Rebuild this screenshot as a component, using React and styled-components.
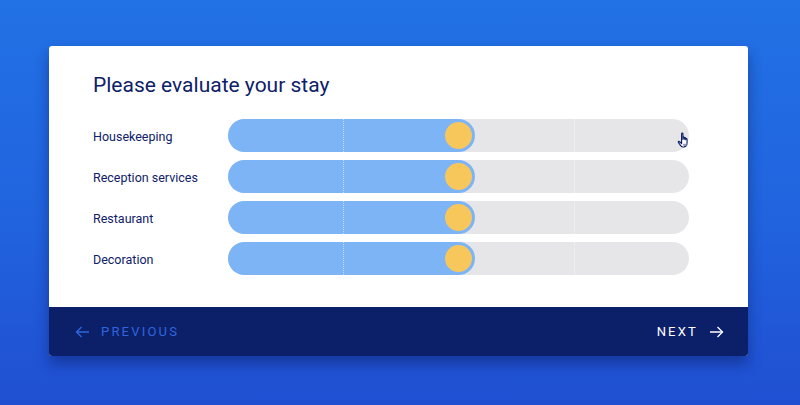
import React from 'react';
import styled, { createGlobalStyle } from 'styled-components';

const GlobalStyle = createGlobalStyle`
  html, body {
    margin: 0;
    padding: 0;
    height: 100%;
  }
  body {
    font-family: Roboto, 'Liberation Sans', sans-serif;
    background: linear-gradient(180deg, #2271e5 0%, #2163de 55%, #204fd2 100%);
  }
`;

const Page = styled.div`
  width: 800px;
  height: 405px;
  padding-top: 46px;
  box-sizing: border-box;
  display: flex;
  justify-content: center;
`;

const Card = styled.div`
  width: 699px;
  margin-left: -3px;
  height: 310px;
  border-radius: 3px;
  overflow: hidden;
  background: #fff;
  box-shadow: 0 8px 14px rgba(8, 22, 90, 0.45);
  display: flex;
  flex-direction: column;
`;

const Body = styled.div`
  flex: 1;
  padding: 27px 59px 0 44px;
`;

const Title = styled.h1`
  margin: 0 0 22px;
  font-size: 21px;
  line-height: 24px;
  font-weight: 400;
  color: #0e2168;
`;

const Rows = styled.div`
  display: flex;
  flex-direction: column;
  gap: 8px;
`;

const Row = styled.div`
  display: grid;
  grid-template-columns: 135px 1fr;
  align-items: center;
`;

const Label = styled.span`
  padding-top: 2px;
  font-size: 12.5px;
  color: #0e2168;
`;

const Track = styled.div`
  position: relative;
  height: 33px;
  border-radius: 17px;
  background: #e6e6e9;
`;

const Fill = styled.div`
  position: absolute;
  left: 0;
  top: 0;
  bottom: 0;
  border-radius: 17px 0 0 17px;
  background: #7db4f6;
`;

const Tick = styled.div`
  position: absolute;
  top: 0;
  bottom: 0;
  width: 0;
  border-left: 1px dotted rgba(255, 255, 255, 0.55);
`;

const Knob = styled.div`
  position: absolute;
  top: 0;
  width: 33px;
  height: 33px;
  margin-left: -17px;
  box-sizing: border-box;
  border-radius: 50%;
  border: 3px solid #7db4f6;
  background: #f8c75b;
`;

const Cursor = styled.svg`
  position: absolute;
  right: -4px;
  top: 13px;
  display: block;
`;

const Footer = styled.div`
  height: 49px;
  background: #0c206a;
  display: flex;
  align-items: center;
  justify-content: space-between;
  padding: 0 24px 0 26px;
`;

const NavButton = styled.button`
  display: flex;
  align-items: center;
  gap: 11px;
  border: 0;
  background: none;
  padding: 0;
  font-family: Roboto, 'Liberation Sans', sans-serif;
  font-size: 13px;
  letter-spacing: 2.2px;
  color: ${(props) => (props.active ? '#ffffff' : '#2f66dd')};
  cursor: pointer;
`;

const items = ['Housekeeping', 'Reception services', 'Restaurant', 'Decoration'];

const Arrow = ({ dir }) => (
  <svg width="15" height="12" viewBox="0 0 15 12" fill="none" stroke="currentColor" strokeWidth="1.3">
    {dir === 'left' ? (
      <>
        <path d="M14 6H1.5" />
        <path d="M6.5 1L1.5 6l5 5" />
      </>
    ) : (
      <>
        <path d="M1 6h12.5" />
        <path d="M8.5 1l5 5-5 5" />
      </>
    )}
  </svg>
);

const HandCursor = () => (
  <Cursor width="16" height="17" viewBox="0 0 14 15">
    <path
      d="M4 1.5c0-.8 1.2-.8 1.2 0V6.5V5c0-.8 1.2-.8 1.2 0v1.5V5.6c0-.8 1.2-.8 1.2 0v1.2-.4c0-.8 1.2-.8 1.2 0v3.4c0 2-1.2 3.4-3 3.4H5.2c-1.1 0-1.8-.7-2.4-1.6L1.2 9.2c-.5-.7.3-1.4.9-.8L4 10.2Z"
      fill="#fff"
      stroke="#0e2168"
      strokeWidth="1"
      strokeLinejoin="round"
    />
    <rect x="5.4" y="10.4" width="3" height="1.8" fill="#8e95b2" />
  </Cursor>
);

const Slider = ({ value, showCursor }) => (
  <Track>
    <Fill style={{ width: `${value}%` }} />
    <Tick style={{ left: '25%' }} />
    <Tick style={{ left: '75%' }} />
    <Knob style={{ left: `${value}%` }} />
    {showCursor && <HandCursor />}
  </Track>
);

const App = () => (
  <>
    <GlobalStyle />
    <Page>
      <Card>
        <Body>
          <Title>Please evaluate your stay</Title>
          <Rows>
            {items.map((item, i) => (
              <Row key={item}>
                <Label>{item}</Label>
                <Slider value={50} showCursor={i === 0} />
              </Row>
            ))}
          </Rows>
        </Body>
        <Footer>
          <NavButton>
            <Arrow dir="left" />
            PREVIOUS
          </NavButton>
          <NavButton active>
            NEXT
            <Arrow dir="right" />
          </NavButton>
        </Footer>
      </Card>
    </Page>
  </>
);

export default App;
